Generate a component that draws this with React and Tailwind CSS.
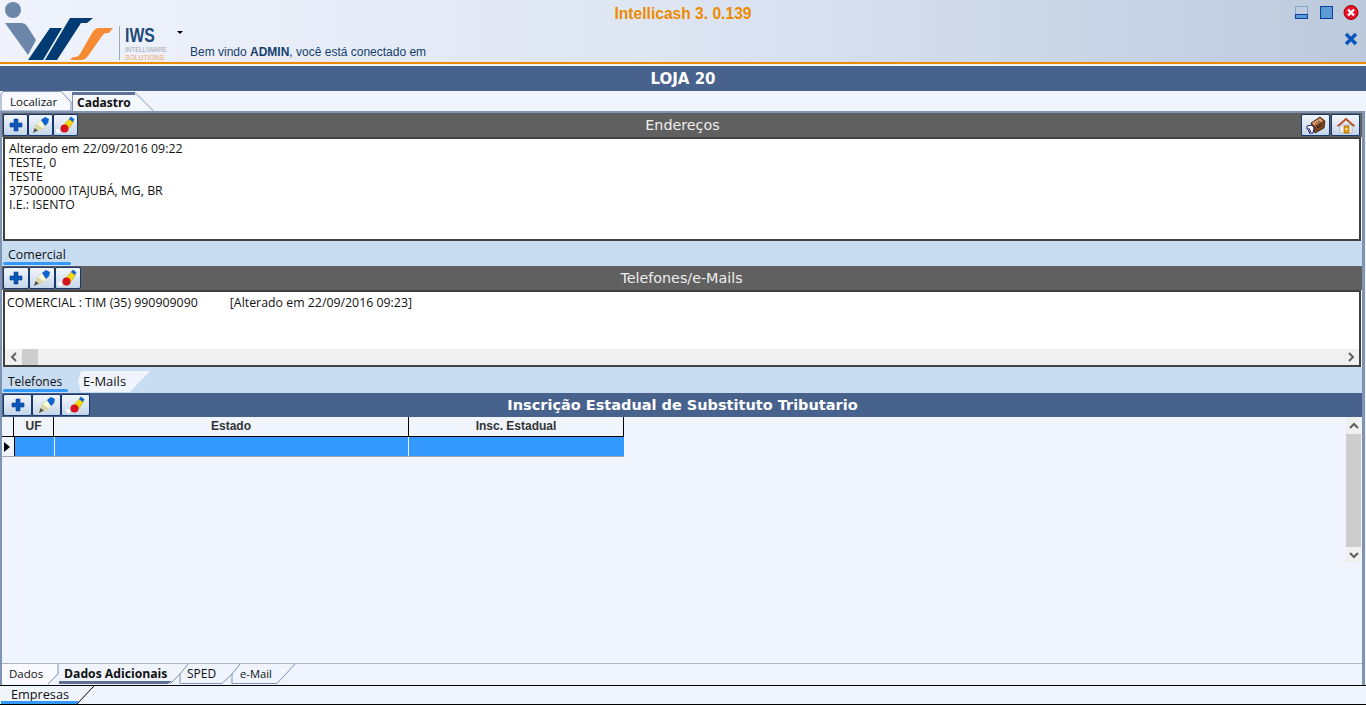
import React from 'react';

const FONT = 'font-["DejaVu_Sans",sans-serif]';
const TAB_FONT = "font-['Open_Sans',sans-serif]";

function Plus() {
  return (
    <svg width="14" height="14" viewBox="0 0 14 14">
      <path d="M5 1h4v4h4v4H9v4H5V9H1V5h4z" fill="#0a57b8" stroke="#0b3f8a" strokeWidth="0.6" />
    </svg>
  );
}

function Pencil() {
  return (
    <svg width="18" height="18" viewBox="0 0 18 18">
      <path d="M1 17L4 8l7 5z" fill="#d8d8a0" />
      <path d="M1 17l1.5-5L6 14.500z" fill="#555" />
      <path d="M4 8l8-6 5 4-6 7z" fill="#f8f8d8" stroke="#b8b890" strokeWidth="0.4" />
      <path d="M9 4l4-3 4 2-1 4-3 3z" fill="#0b62d0" />
    </svg>
  );
}

function Eraser() {
  return (
    <svg width="20" height="18" viewBox="0 0 20 18">
      <path d="M7 10l7-8 4 3-6 9z" fill="#f4d80c" stroke="#a09010" strokeWidth="0.4" />
      <path d="M13 3l2-2.500 3.500 3-2 2.500z" fill="#1668d8" />
      <circle cx="8.500" cy="12.500" r="4" fill="#d8121c" />
      <path d="M0 13h3v1h1v3H1v-1H0z" fill="#fff" />
    </svg>
  );
}

function Book() {
  return (
    <svg width="20" height="18" viewBox="0 0 20 18">
      <path d="M5 7l9-6 5 4-1 7-9 5z" fill="#7a4420" stroke="#2d1a0a" strokeWidth="0.8" />
      <path d="M6 7l8-5 3 3-8 5z" fill="#e0a070" />
      <path d="M12 5l3 2M10 6l4 3M9 8l3 3M11 12l5-3" stroke="#2d1a0a" strokeWidth="0.8" />
      <path d="M1 10l5-1 2 3-1 5H3l2-2H2l2-2H1z" fill="#fff" stroke="#16167a" strokeWidth="1" />
    </svg>
  );
}

function Home() {
  return (
    <svg width="20" height="18" viewBox="0 0 20 18">
      <path d="M4 9h12v8H4z" fill="#f2f2f2" stroke="#a0a0a0" strokeWidth="0.6" />
      <path d="M1 10L10 2l9 8-2 0-7-6-7 6z" fill="#cc4a14" stroke="#8a2c08" strokeWidth="0.4" />
      <path d="M8 10h5v7H8z" fill="#e89a10" stroke="#8a5a08" strokeWidth="0.6" />
      <path d="M9.500 12h2v2h-2z" fill="#fff2c0" />
    </svg>
  );
}

function ToolBtn({ children, w }) {
  return (
    <div className={`${w} h-[22px] flex items-center justify-center border border-[#16386f] rounded-[2px] bg-gradient-to-b from-[#f2f6fc] to-[#c5d6ea] shrink-0`}>
      {children}
    </div>
  );
}

function ToolBar({ title, bg, bold, btn, titleClass, right }) {
  return (
    <div className={`h-[24px] ${bg} flex items-center pl-[1px] pr-[2px] shrink-0`}>
      <div className="flex">
        <ToolBtn w={btn}><Plus /></ToolBtn>
        <ToolBtn w={btn}><Pencil /></ToolBtn>
        <ToolBtn w={btn}><Eraser /></ToolBtn>
      </div>
      <div className={`flex-1 text-center leading-none ${bold ? 'font-bold text-white' : 'text-[#eeeeee]'} ${titleClass}`}>{title}</div>
      {right}
    </div>
  );
}

function TabLabel({ children, w, pl, pt, size, bold }) {
  return (
    <div className={`${w} ${pl} ${pt} ${size} shrink-0 leading-[16px] text-[#111] whitespace-nowrap ${bold ? 'font-bold' : ''}`}>
      {children}
    </div>
  );
}

function Memo({ children, h }) {
  return (
    <div className={`${h} mx-[1px] border-2 border-[#404040] bg-white shrink-0 relative`}>
      {children}
    </div>
  );
}

function Chevron({ d }) {
  return (
    <svg width="10" height="10" viewBox="0 0 10 10">
      <path d={d} fill="none" stroke="#606060" strokeWidth="2" />
    </svg>
  );
}

export default function App() {
  return (
    <div className={`w-[1366px] h-[705px] overflow-hidden bg-[#f0f4fd] flex flex-col ${FONT}`}>
      {/* cabecalho */}
      <div className="h-[62px] shrink-0 bg-gradient-to-r from-[#f0f3fc] via-[#dde5f3] to-[#bccadc] flex relative">
        <svg width="115" height="62" viewBox="0 0 115 62" className="shrink-0">
          <circle cx="13" cy="10" r="8" fill="#6a87aa" />
          <path d="M5 23h17q3 0 5 3l9 14-8 15z" fill="#6a87aa" />
          <path d="M28 60L50 28h12L43 60z" fill="#003b73" />
          <path d="M45 60L70 18h23l-6 5h-6L57 60z" fill="#003b73" />
          <path d="M70 60l3-3h3q2 0 4-3L92 33q3-5 7-5h14l-4 5h-3q-2 0-4 3L88 56q-3 4-7 4z" fill="#f68b33" />
        </svg>
        <div className="w-px h-[34px] mt-[26px] ml-[4px] bg-[#9aa8b8]" />
        <div className="ml-[5px] mt-[25px] w-[44px]">
          <div className="text-[21px] leading-[19px] font-bold text-[#1f4a78] font-['Liberation_Sans',sans-serif] [transform:scaleX(0.75)] origin-left">IWS</div>
          <div className="text-[6.300px] leading-[8px] mt-[2px] text-[#a8a8b0] font-['Liberation_Sans',sans-serif] whitespace-nowrap">INTELLIWARE</div>
          <div className="text-[6.800px] leading-[8px] text-[#f0a860] font-['Liberation_Sans',sans-serif] whitespace-nowrap">SOLUTIONS</div>
        </div>
        <div className="absolute left-[177px] top-[31px] w-0 h-0 border-l-[3px] border-r-[3px] border-t-[3px] border-l-transparent border-r-transparent border-t-black" />
        <div className="absolute left-[190px] top-[44px] text-[12px] leading-[16px] text-[#15406e] font-['Liberation_Sans',sans-serif] whitespace-nowrap">
          Bem vindo <b>ADMIN</b>, você está conectado em
        </div>
        <div className="absolute left-0 right-0 top-[4px] text-center text-[15.600px] leading-[20px] font-bold text-[#ee8a00] font-['Liberation_Sans',sans-serif]">
          Intellicash 3. 0.139
        </div>
        {/* botoes da janela */}
        <svg className="absolute left-[1294px] top-[5px]" width="66" height="44" viewBox="0 0 66 44">
          <rect x="1.500" y="1.500" width="12" height="9" fill="none" stroke="#4a7fc4" strokeDasharray="1 1" />
          <rect x="1.500" y="9.500" width="12" height="4" fill="#5b9bd5" stroke="#0a3ea0" />
          <rect x="26.500" y="1.500" width="12" height="12" fill="#5b9bd5" stroke="#0a3ea0" />
          <circle cx="57" cy="7.500" r="7" fill="#e8102a" stroke="#900" />
          <path d="M54 4.500l6 6M60 4.500l-6 6" stroke="#fff" strokeWidth="2.400" />
          <path d="M52 29l10 10M62 29l-10 10" stroke="#0a55b8" strokeWidth="3.400" />
        </svg>
      </div>
      <div className="h-[2px] shrink-0 bg-[#ee8a00]" />
      <div className="h-[2px] shrink-0 bg-[#f0f4fd]" />
      <div className="h-[25px] shrink-0 bg-[#48628e] flex items-center justify-center text-[15px] font-bold text-white pt-[2px]">LOJA 20</div>

      {/* abas de topo */}
      <div className={`h-[20px] shrink-0 flex relative ${TAB_FONT}`}>
        <svg className="absolute left-0 top-0" width="160" height="20">
          <path d="M1 20V3L3 0.500H61L71 11V20z" fill="#f8faff" stroke="#7f93b5" />
          <path d="M72.500 20V1.500H135L153.500 20" fill="#f4f7fe" stroke="#7f93b5" />
          <rect x="72" y="1" width="63" height="3" fill="#5f7296" />
        </svg>
        <div className="relative flex">
          <TabLabel w="w-[77px]" pl="pl-[10px]" pt="pt-[3px]" size="text-[11.500px]">Localizar</TabLabel>
          <TabLabel w="w-[80px]" pt="pt-[4px]" size="text-[12px]" bold>Cadastro</TabLabel>
        </div>
      </div>

      {/* area central */}
      <div className="flex-1 min-h-0 mr-[1px] border-x-2 border-t-2 border-[#7f93b5] border-r-[3px] bg-[#eff4fd] flex flex-col">
        <ToolBar
          title="Endereços"
          bg="bg-[#606060]"
          btn="w-[25px]"
          titleClass="text-[14.300px] pr-[14px]"
          right={
            <div className="flex gap-[1px]">
              <ToolBtn w="w-[29px]"><Book /></ToolBtn>
              <ToolBtn w="w-[29px]"><Home /></ToolBtn>
            </div>
          }
        />
        <Memo h="h-[104px]">
          <div className="pl-[4px] pt-[3px] text-[12.300px] leading-[14px] text-[#111] font-['Open_Sans',sans-serif]">
            <div>Alterado em 22/09/2016 09:22</div>
            <div>TESTE, 0</div>
            <div>TESTE</div>
            <div>37500000 ITAJUBÁ, MG, BR</div>
            <div>I.E.: ISENTO</div>
          </div>
        </Memo>
        <div className={`h-[25px] shrink-0 bg-[#c9ddf2] relative ${TAB_FONT}`}>
          <TabLabel w="w-[70px]" pl="pl-[6px]" pt="pt-[6px]" size="text-[12.400px]">Comercial</TabLabel>
          <div className="absolute left-[1px] bottom-[1px] w-[68px] h-[3px] rounded-full bg-[#3399ff]" />
        </div>
        <ToolBar title="Telefones/e-Mails" bg="bg-[#606060]" btn="w-[26px]" titleClass="text-[14.300px] pr-[78px]" />
        <Memo h="h-[77px]">
          <div className="pl-[2px] pt-[4px] text-[12.350px] leading-[14px] text-[#111] whitespace-pre font-['Open_Sans',sans-serif]">
            COMERCIAL : TIM (35) 990909090          [Alterado em 22/09/2016 09:23]
          </div>
          <div className="absolute left-0 right-0 bottom-0 h-[16px] bg-[#f0f0f0] flex items-center">
            <div className="w-[17px] flex justify-center"><Chevron d="M7 1L3 5l4 4" /></div>
            <div className="w-[16px] h-full bg-[#cdcdcd]" />
            <div className="flex-1" />
            <div className="w-[17px] flex justify-center"><Chevron d="M3 1l4 4-4 4" /></div>
          </div>
        </Memo>
        <div className={`h-[26px] shrink-0 bg-[#c9ddf2] flex relative ${TAB_FONT}`}>
          <TabLabel w="w-[76px]" pl="pl-[6px]" pt="pt-[7px]" size="text-[12px]">Telefones</TabLabel>
          <div className="h-[21px] mt-[4px] w-[72px] bg-[#f0f4fd] pl-[5px] text-[13px] leading-[21px] text-[#111] [clip-path:polygon(3px_0,100%_0,72%_100%,3px_100%,0_50%)]">E-Mails</div>
          <div className="absolute left-[1px] bottom-[1px] w-[65px] h-[3px] rounded-full bg-[#3399ff]" />
        </div>
        <ToolBar title="Inscrição Estadual de Substituto Tributario" bg="bg-[#48628e]" btn="w-[29px]" bold titleClass="text-[14.500px] pr-[85px]" />

        {/* grade */}
        <div className="flex-1 min-h-0 flex">
          <div className="flex-1">
            <div className="flex h-[20px] w-[622px] text-[12px] font-bold text-[#333] font-['Liberation_Sans',sans-serif] border-b border-black">
              <div className="w-[12px] border-r border-black" />
              <div className="w-[40px] border-r border-black text-center leading-[18px]">UF</div>
              <div className="w-[355px] border-r border-black text-center leading-[18px]">Estado</div>
              <div className="flex-1 border-r border-black text-center leading-[18px]">Insc. Estadual</div>
            </div>
            <div className="flex h-[20px] w-[622px] border-b border-[#a8a8a8]">
              <div className="w-[13px] border-r border-black flex items-center bg-[#f0f4fd] pl-[2px]">
                <div className="w-0 h-0 border-y-[5px] border-l-[6px] border-y-transparent border-l-black" />
              </div>
              <div className="w-[40px] border-r border-[#e8f0ff] bg-[#3399ff]" />
              <div className="w-[354px] border-r border-[#e8f0ff] bg-[#3399ff]" />
              <div className="flex-1 bg-[#3399ff]" />
            </div>
          </div>
          <div className="w-[15px] h-[146px] mr-[1px] bg-[#f0f0f0] flex flex-col items-center shrink-0">
            <div className="h-[17px] flex items-center"><Chevron d="M1 7l4-4 4 4" /></div>
            <div className="w-full h-[113px] bg-[#cdcdcd]" />
            <div className="h-[16px] flex items-center"><Chevron d="M1 3l4 4 4-4" /></div>
          </div>
        </div>

        {/* abas inferiores */}
        <div className={`h-[22px] shrink-0 border-t border-[#a8b4c8] flex relative ${TAB_FONT}`}>
          <svg className="absolute left-[-2px] top-[-1px]" width="320" height="23">
            <path d="M2 20V1H58V11L48 21H4z" fill="#f8faff" />
            <path d="M58 1V11L48 21" fill="none" stroke="#7f93b5" />
            <path d="M59 18H172L168 21H59z" fill="#5f7296" />
            <path d="M170 21L180 11V21M180 11L188 1" fill="none" stroke="#7f93b5" />
            <path d="M181 20.500H222L232 11V21M232 11L240 1" fill="none" stroke="#7f93b5" />
            <path d="M232 20.500H277L295 1" fill="none" stroke="#7f93b5" />
          </svg>
          <div className="relative flex">
            <TabLabel w="w-[62px]" pl="pl-[7px]" pt="pt-[2px]" size="text-[11.500px]">Dados</TabLabel>
            <TabLabel w="w-[123px]" pt="pt-[2px]" size="text-[12.200px]" bold>Dados Adicionais</TabLabel>
            <TabLabel w="w-[53px]" pt="pt-[2px]" size="text-[12px]">SPED</TabLabel>
            <TabLabel w="w-[40px]" pt="pt-[2px]" size="text-[11.200px]">e-Mail</TabLabel>
          </div>
        </div>
      </div>

      <div className="h-[1px] shrink-0 bg-black" />
      <div className={`h-[18px] shrink-0 relative ${TAB_FONT}`}>
        <TabLabel w="w-[93px]" pl="pl-[11px]" pt="pt-0" size="text-[12.700px]">Empresas</TabLabel>
        <div className="absolute left-[1px] bottom-0 w-[77px] h-[3px] bg-[#3399ff]" />
        <svg className="absolute left-[76px] top-0" width="19" height="18">
          <line x1="1" y1="18" x2="18" y2="0" stroke="#000" strokeWidth="1" />
        </svg>
      </div>
      <div className="h-[1px] shrink-0 bg-black" />
    </div>
  );
}
